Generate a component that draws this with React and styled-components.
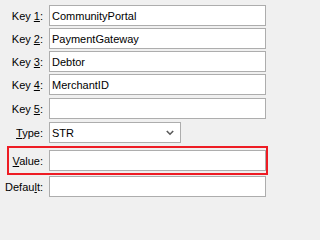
import React from 'react';
import styled, {createGlobalStyle} from "styled-components";

const GlobalStyle = createGlobalStyle`
  html, body {
    margin: 0;
    padding: 0;
    background: #f0f0f0;
  }
  body {
    font-family: "Liberation Sans", Arial, sans-serif;
    font-size: 11px;
    color: #000;
  }
`;

const Form = styled.div`
  width: 271px;
  height: 202px;
  box-sizing: border-box;
  padding: 5px 0 0 0;
  display: flex;
  flex-direction: column;
  background: #f0f0f0;
`;

const Row = styled.div`
  display: flex;
  align-items: center;
  height: 21px;
  margin-top: ${props => props.$top || 0}px;
  margin-right: 5px;
  ${props => props.$highlight && `
    box-sizing: content-box;
    margin-left: 7px;
    margin-right: 3px;
    padding: 2px 0;
    border: 2px solid #ee1c24;
  `}
`;

const Label = styled.label`
  flex: 0 0 ${props => props.$width || 44}px;
  box-sizing: border-box;
  padding-right: 1px;
  text-align: right;
  white-space: nowrap;
  margin-right: 5px;
  color: #000;

  u {
    text-decoration: underline;
    text-underline-offset: 1px;
  }
`;

const Field = styled.div`
  flex: ${props => props.$width ? `0 0 ${props.$width}px` : '1 1 auto'};
  height: 21px;
  box-sizing: border-box;
  border: 1px solid #adadad;
  background: #fff;
  display: flex;
  align-items: center;
  padding: 0 2px;
  position: relative;
`;

const Text = styled.span`
  color: #000;
  white-space: nowrap;
`;

const Chevron = styled.svg`
  position: absolute;
  right: 6px;
  top: 7px;
`;

const keys = ['CommunityPortal', 'PaymentGateway', 'Debtor', 'MerchantID', ''];

const App = () => {
    return (
        <>
            <GlobalStyle/>
            <Form>
                {keys.map((value, index) => (
                    <Row key={index} $top={index === 0 ? 0 : (index === 4 ? 3 : 2)}>
                        <Label>Key <u>{index + 1}</u>:</Label>
                        <Field><Text>{value}</Text></Field>
                    </Row>
                ))}
                <Row $top={3}>
                    <Label><u>T</u>ype:</Label>
                    <Field $width={132}>
                        <Text>STR</Text>
                        <Chevron width="8" height="6" viewBox="0 0 8 6">
                            <path d="M0.8 1 L4 4.2 L7.2 1" fill="none" stroke="#5a5a5a" strokeWidth="1.6"/>
                        </Chevron>
                    </Field>
                </Row>
                <Row $top={3} $highlight>
                    <Label $width={35}><u>V</u>alue:</Label>
                    <Field/>
                </Row>
                <Row $top={1}>
                    <Label>Defau<u>l</u>t:</Label>
                    <Field/>
                </Row>
            </Form>
        </>
    );
};

export default App;
